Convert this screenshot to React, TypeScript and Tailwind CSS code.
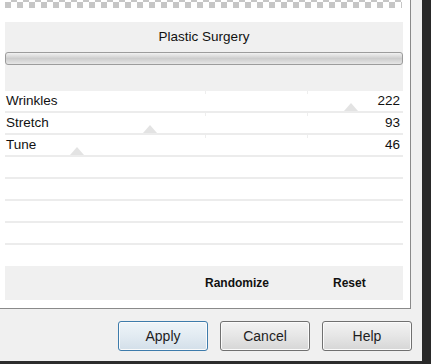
import React from 'react';

const sliders = [
  { label: 'Wrinkles', value: 222 },
  { label: 'Stretch', value: 93 },
  { label: 'Tune', value: 46 },
];

const emptyRows = 4;

function Slider({ label, value }: { label?: string; value?: number }) {
  // triangle marker sits on the row's bottom line, left edge of the track is x=0 of the row
  const markerX = value !== undefined ? (value * 398) / 255 : null;
  return (
    <div className="relative h-[22px] border-b-2 border-[#ececec] flex items-center justify-between pl-[1px] pr-[3px]">
      {label && <span className="absolute top-0 left-[200px] w-px h-[3px] bg-[#eeeeee]" />}
      {label && <span className="absolute top-0 left-[302px] w-px h-[3px] bg-[#eeeeee]" />}
      {markerX !== null && (
        <span
          className="absolute bottom-0 w-0 h-0 border-l-[7px] border-r-[7px] border-b-[8px] border-l-transparent border-r-transparent border-b-[#e3e3e3]"
          style={{ left: markerX - 7 }}
        />
      )}
      <span className="relative text-[13.5px] text-[#111] leading-none">{label}</span>
      <span className="relative text-[13.5px] text-[#111] leading-none">{value}</span>
    </div>
  );
}

function WinButton({ children, primary }: { children: React.ReactNode; primary?: boolean }) {
  return (
    <button
      className={`w-[90px] h-[30px] rounded-[3px] border text-[14px] text-[#1e1e1e] shadow-[inset_0_0_0_1px_#fbfbfb] ${
        primary
          ? 'border-[#3d7bab] bg-linear-to-b from-[#eef4f9] via-[#e2ebf2] to-[#d3dfe9]'
          : 'border-[#707070] bg-linear-to-b from-[#f3f3f3] via-[#e6e6e6] to-[#d6d6d6]'
      }`}
    >
      {children}
    </button>
  );
}

export default function App() {
  return (
    <div className="w-[431px] h-[364px] flex bg-[#f0f0f0] font-['Liberation_Sans',Arial,sans-serif] overflow-hidden">
      <div className="w-[422px] flex flex-col">
        {/* effect panel */}
        <div className="w-[411px] h-[309px] bg-white border-r border-b border-[#8a8a8a] flex flex-col">
          <div className="ml-[5px] w-[397px] h-[8px] [background-image:conic-gradient(#c6c6c6_25%,#fff_0_50%,#c6c6c6_0_75%,#fff_0)] [background-size:12px_12px] [background-position:0_-4px]" />

          <div className="ml-[5px] mt-[14px] w-[398px] h-[69px] bg-[#f0f0f0] flex flex-col">
            <div className="mt-[7px] h-[16px] leading-[16px] text-center text-[13.5px] text-[#111]">Plastic Surgery</div>
            <div className="mt-[7px] h-[13px] rounded-[3px] border border-[#9c9c9c] bg-linear-to-b from-[#f2f2f2] via-[#cdcdcd] to-[#e6e6e6]" />
          </div>

          <div className="ml-[5px] w-[398px] flex flex-col">
            {sliders.map((s) => (
              <Slider key={s.label} label={s.label} value={s.value} />
            ))}
            {Array.from({ length: emptyRows }).map((_, i) => (
              <Slider key={i} />
            ))}
            <div className="h-[21px]" />
          </div>

          <div className="ml-[5px] w-[398px] h-[34px] bg-[#f0f0f0] flex items-center text-[12px] font-bold text-[#111]">
            <span className="ml-[200px]">Randomize</span>
            <span className="ml-[64px]">Reset</span>
          </div>
        </div>

        {/* dialog buttons */}
        <div className="h-[52px] flex items-start pt-[12px] pl-[118px] gap-[12px]">
          <WinButton primary>Apply</WinButton>
          <WinButton>Cancel</WinButton>
          <WinButton>Help</WinButton>
        </div>
        <div className="h-[3px] bg-[#2c2c2c]" />
      </div>
      <div className="w-[9px] bg-[#292929]" />
    </div>
  );
}
